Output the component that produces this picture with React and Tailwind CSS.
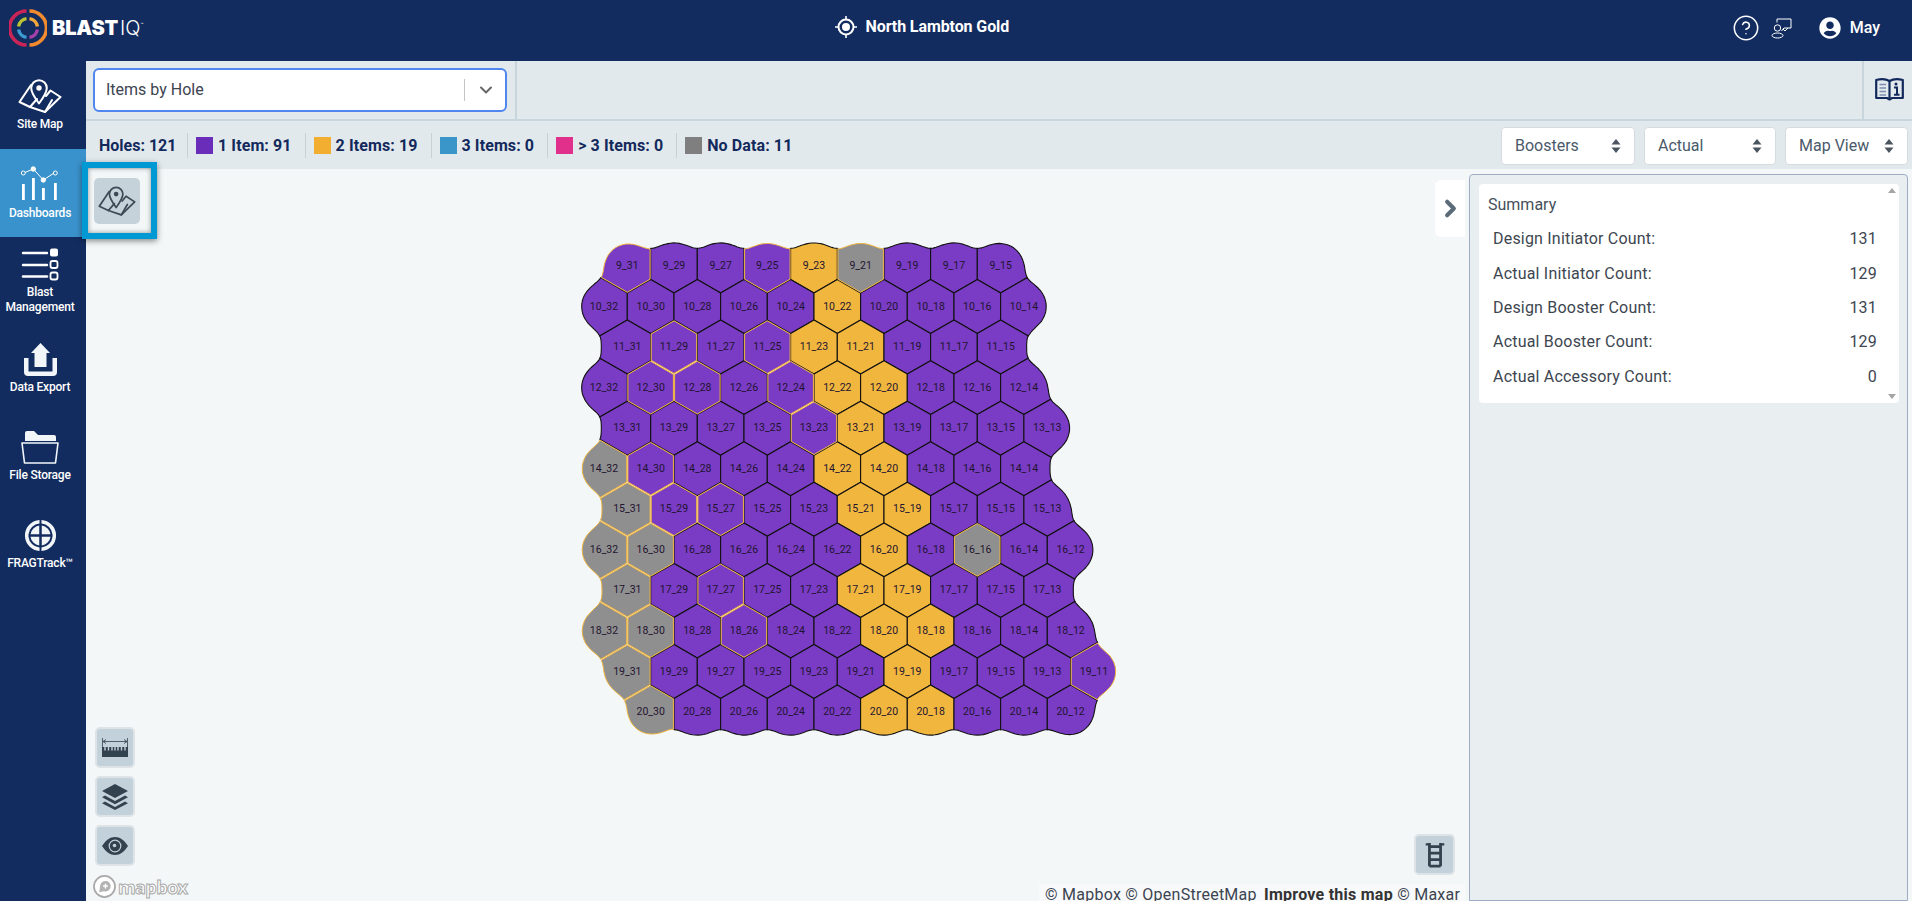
import React from 'react';
import { CircleHelp, ChevronDown, ChevronRight } from 'lucide-react';
import { FaUserCircle } from 'react-icons/fa';

// hole grid: row -> [first, last] hole number, going down by 2
const rows = { 9: [31, 15], 10: [32, 14], 11: [31, 15], 12: [32, 14], 13: [31, 13], 14: [32, 14], 15: [31, 13], 16: [32, 12], 17: [31, 13], 18: [32, 12], 19: [31, 11], 20: [30, 12] };
const twoItems = ['9_23', '10_22', '11_23', '11_21', '12_22', '12_20', '13_21', '14_22', '14_20', '15_21', '15_19', '16_20', '17_21', '17_19', '18_20', '18_18', '19_19', '20_20', '20_18'];
const noData = ['9_21', '14_32', '15_31', '16_32', '16_30', '16_16', '17_31', '18_32', '18_30', '19_31', '20_30'];
const goldEdge = ['9_31', '9_25', '11_29', '11_25', '12_30', '12_28', '12_24', '13_23', '14_30', '15_29', '15_27', '17_27', '18_26', '19_11'];

const holes = [];
Object.keys(rows).forEach((r) => {
    for (let n = rows[r][0]; n >= rows[r][1]; n -= 2) {
        holes.push({ id: `${r}_${n}`, x: 604 + (32 - n) * 23.33, y: 266 + (r - 9) * 40.55 });
    }
});

// soft blob around all holes gives the wavy outer edge
const field = (x, y) => {
    let s = 0;
    holes.forEach((h) => { s += Math.exp(-0.1 * Math.hypot(x - h.x, y - h.y)); });
    return -Math.log(s) / 0.1;
};
const outline = [];
for (let i = 0; i < 720; i++) {
    const a = (i / 720) * Math.PI * 2;
    let r = 420;
    while (r > 0 && field(826 + r * Math.cos(a), 478 + r * Math.sin(a)) > 21.8) r -= 3;
    let lo = r, hi = r + 3;
    for (let j = 0; j < 6; j++) {
        const m = (lo + hi) / 2;
        if (field(826 + m * Math.cos(a), 478 + m * Math.sin(a)) > 21.8) hi = m; else lo = m;
    }
    outline.push([826 + lo * Math.cos(a), 478 + lo * Math.sin(a)]);
}

// cut the outline down to the part nearer to this hole than to any other
const cellOf = (h) => {
    let poly = outline;
    holes.forEach((o) => {
        if (o === h || Math.hypot(o.x - h.x, o.y - h.y) > 110) return;
        const mx = (o.x + h.x) / 2, my = (o.y + h.y) / 2, nx = o.x - h.x, ny = o.y - h.y;
        const side = (p) => (p[0] - mx) * nx + (p[1] - my) * ny;
        const out = [];
        poly.forEach((p, i) => {
            const q = poly[(i + 1) % poly.length];
            const a = side(p), b = side(q);
            if (a <= 0) out.push(p);
            if ((a < 0 && b > 0) || (a > 0 && b < 0)) {
                const t = a / (a - b);
                out.push([p[0] + (q[0] - p[0]) * t, p[1] + (q[1] - p[1]) * t]);
            }
        });
        poly = out;
    });
    return poly;
};
const cells = holes.map((h) => {
    const gold = goldEdge.includes(h.id) || noData.includes(h.id);
    const k = gold ? 0.975 : 1;
    const pts = cellOf(h).map((p) => `${(h.x + (p[0] - h.x) * k).toFixed(1)},${(h.y + (p[1] - h.y) * k).toFixed(1)}`).join(' ');
    const fill = twoItems.includes(h.id) ? '#f1b63e' : noData.includes(h.id) ? '#8f8f8f' : '#7a3cc4';
    return { ...h, gold, pts, fill };
});

const MapIcon = ({ color = '#fff', className }) => (
    <svg viewBox="0 0 44 34" className={className} fill="none" stroke={color} strokeWidth="2" strokeLinejoin="round" strokeLinecap="round">
        <path d="M13 6 L1.5 23 L12 28 L19 20" />
        <path d="M12 28 L27 33 L42.5 18 L32.5 11.5 L28 17" />
        <path d="M27 33 L34 21" />
        <path d="M21 1.2 a7.8 7.8 0 0 1 7.8 7.8 c0 5 -7.8 15.5 -7.8 15.5 s-7.8 -10.5 -7.8 -15.5 a7.8 7.8 0 0 1 7.8 -7.8z" />
        <circle cx="21" cy="9" r="2.7" fill={color} stroke="none" />
    </svg>
);

const DashIcon = () => (
    <svg viewBox="0 0 42 36" className="w-[42px] h-[36px]" fill="none" stroke="#fff" strokeWidth="1">
        <path d="M6 6.5 L14.3 3 L24.3 14 L34.3 7.5" />
        <circle cx="4.3" cy="7" r="2" fill="#3a92cc" />
        <circle cx="14.3" cy="3" r="2.2" fill="#fff" />
        <circle cx="24.3" cy="14" r="2.2" fill="#fff" />
        <circle cx="36.3" cy="7" r="2" fill="#3a92cc" />
        <g fill="#fff" stroke="none">
            <rect x="3" y="18" width="2.8" height="16" />
            <rect x="13" y="12" width="2.8" height="22" />
            <rect x="23" y="22" width="2.8" height="12" />
            <rect x="35" y="17" width="2.8" height="17" />
        </g>
    </svg>
);

const BlastIcon = () => (
    <svg viewBox="0 0 38 33" className="w-[38px] h-[33px]" fill="none" stroke="#fff" strokeWidth="2.4">
        <g strokeLinecap="round">
            <path d="M2 5 H26" />
            <path d="M2 17 H26" />
            <path d="M2 28.5 H26" />
        </g>
        <rect x="29" y="0.5" width="8" height="8" rx="2" fill="#fff" stroke="none" />
        <rect x="29.5" y="13" width="7" height="7" rx="2" strokeWidth="1.8" />
        <rect x="29.5" y="24.5" width="7" height="7" rx="2" strokeWidth="1.8" />
    </svg>
);

const ExportIcon = () => (
    <svg viewBox="0 0 33 33" className="w-[33px] h-[33px]" fill="#f2f6f9">
        <path d="M16.5 0 L26 10 H22.5 V24 H10.5 V10 H7 Z" />
        <path d="M0 15 H4.5 V28.5 H28.5 V15 H33 V29 a4 4 0 0 1 -4 4 H4 a4 4 0 0 1 -4 -4 Z" />
    </svg>
);

const FolderIcon = () => (
    <svg viewBox="0 0 38 33" className="w-[38px] h-[33px]">
        <path d="M4 10 V2 a2 2 0 0 1 2 -2 H13 L17 4 H33 a2 2 0 0 1 2 2 V10 Z" fill="#f2f6f9" />
        <path d="M1 12 H37 L34.5 32 H3.5 Z" fill="none" stroke="#f2f6f9" strokeWidth="1.6" strokeLinejoin="round" />
    </svg>
);

const FragIcon = () => (
    <svg viewBox="0 0 34 34" className="w-[33px] h-[33px]">
        <path d="M16 1 A16 16 0 0 0 1 16 V18 A16 16 0 0 0 16 33 V29.4 A12.5 12.5 0 0 1 4.6 18 V16 A12.5 12.5 0 0 1 16 4.6 Z M18 1 A16 16 0 0 1 33 16 V18 A16 16 0 0 1 18 33 V29.4 A12.5 12.5 0 0 0 29.4 18 V16 A12.5 12.5 0 0 0 18 4.6 Z" fill="#f2f6f9" />
        <path d="M15.7 6.7 A10.4 10.4 0 0 0 6.7 15.7 H15.7 Z M18.3 6.7 A10.4 10.4 0 0 1 27.3 15.7 H18.3 Z M15.7 27.3 A10.4 10.4 0 0 1 6.7 18.3 H15.7 Z M18.3 27.3 A10.4 10.4 0 0 0 27.3 18.3 H18.3 Z" fill="#f2f6f9" />
    </svg>
);

const Logo = () => (
    <svg viewBox="0 0 38 38" className="w-[38px] h-[38px]" fill="none">
        <path d="M17.5 2 A17 17 0 0 0 17.5 36" stroke="#cb2456" strokeWidth="3.6" />
        <path d="M20.5 2 A17 17 0 0 1 20.5 36" stroke="#f28a2e" strokeWidth="3.6" />
        <path d="M17.5 9.6 A9.5 9.5 0 0 0 9.6 17.5" stroke="#b9c433" strokeWidth="3.4" />
        <path d="M20.5 9.6 A9.5 9.5 0 0 1 28.4 17.5" stroke="#f3a93a" strokeWidth="3.4" />
        <path d="M9.6 20.5 A9.5 9.5 0 0 0 17.5 28.4" stroke="#3c9bd0" strokeWidth="3.4" />
        <path d="M28.4 20.5 A9.5 9.5 0 0 1 20.5 28.4" stroke="#a540a8" strokeWidth="3.4" />
    </svg>
);

const TargetIcon = () => (
    <svg viewBox="0 0 22 22" className="w-[22px] h-[22px]" fill="none" stroke="#fff" strokeWidth="2">
        <circle cx="11" cy="11" r="7.5" />
        <circle cx="11" cy="11" r="4" fill="#fff" stroke="none" />
        <path d="M11 0 V3.5 M11 18.5 V22 M0 11 H3.5 M18.5 11 H22" strokeWidth="1.6" />
    </svg>
);

const SupportIcon = () => (
    <svg viewBox="0 0 21 21" className="w-[21px] h-[21px]" fill="none" stroke="#fff" strokeWidth="1">
        <path d="M6 4.5 V1 H20 V10 H13 L10.5 13" />
        <circle cx="6.5" cy="10" r="3.2" />
        <ellipse cx="6.5" cy="17.5" rx="5.5" ry="2.5" />
        <path d="M12 11 L14 13 L17 10" />
    </svg>
);

const BookIcon = () => (
    <svg viewBox="0 0 29 23" className="w-[29px] h-[23px]" fill="none" stroke="#13295c" strokeWidth="2.2">
        <path d="M14.5 3 C11 1 5 1 1.2 2 V20 H12 L14.5 21.5 L17 20 H27.8 V2 C24 1 18 1 14.5 3 Z" strokeLinejoin="round" />
        <path d="M14.5 3 V21" />
        <path d="M4.5 6.5 H11 M4.5 10 H11 M4.5 13.5 H11 M4.5 17 H11" stroke="#7f8db0" strokeWidth="1.3" />
        <circle cx="21" cy="6" r="1.5" fill="#13295c" stroke="none" />
        <path d="M19 9.5 H22 V16.5 M19 16.8 H24.5" strokeWidth="2" />
    </svg>
);

const RulerIcon = () => (
    <svg viewBox="0 0 26 20" className="w-[26px] h-[20px]" fill="none" stroke="#33424f">
        <path d="M0.5 0 V12 M25.5 0 V12 M1 3.5 H25 M1 3.5 L4 1.5 M1 3.5 L4 5.5 M25 3.5 L22 1.5 M25 3.5 L22 5.5" strokeWidth="0.8" />
        <path d="M0 9 H26 V19 H0 Z" fill="#33424f" stroke="none" />
        <path d="M3 9 V12.5 M6.5 9 V12.5 M10 9 V12.5 M13 9 V12.5 M16 9 V12.5 M19.5 9 V12.5 M23 9 V12.5" stroke="#c3d1db" strokeWidth="1.4" />
    </svg>
);

const LayersIcon = () => (
    <svg viewBox="0 0 26 26" className="w-[26px] h-[26px]" fill="#33424f">
        <path d="M13 0 L26 7 L13 14 L0 7 Z" />
        <path d="M3 11.5 L13 17 L23 11.5 L26 13.3 L13 20.2 L0 13.3 Z" />
        <path d="M3 17.5 L13 23 L23 17.5 L26 19.2 L13 26 L0 19.2 Z" />
    </svg>
);

const EyeIcon = () => (
    <svg viewBox="0 0 26 18" className="w-[26px] h-[18px]">
        <path d="M0 9 C4 3 8 0 13 0 C18 0 22 3 26 9 C22 15 18 18 13 18 C8 18 4 15 0 9 Z" fill="#33424f" />
        <circle cx="13" cy="9" r="5.8" fill="none" stroke="#c3d1db" strokeWidth="1.2" />
        <circle cx="12.5" cy="8.5" r="1.8" fill="#c3d1db" />
    </svg>
);

const LadderIcon = () => (
    <svg viewBox="0 0 22 28" className="w-[22px] h-[26px]" fill="none" stroke="#33424f" strokeWidth="3">
        <path d="M5 1 V26 M17 1 V26 M5 26 H17 M5 19 H17 M5 12 H17 M5 5 H17" />
        <path d="M1 2.5 H5 M17 2.5 H21" strokeWidth="2.4" />
    </svg>
);

const MapboxMark = () => (
    <svg viewBox="0 0 24 24" className="w-[23px] h-[23px]">
        <circle cx="12" cy="12" r="11" fill="#fff" stroke="#a9a9a9" strokeWidth="1.8" />
        <path d="M6.5 18 L7.5 11 a5.5 5.5 0 1 1 4 6 Z" fill="#b3b3b3" />
        <path d="M13 9 V14 M10.5 11.5 H15.5" stroke="#fff" strokeWidth="1.6" />
    </svg>
);

const UpDown = () => (
    <svg viewBox="0 0 10 14" className="w-[10px] h-[14px]" fill="#4a5560">
        <path d="M5 0 L9.5 5.5 H0.5 Z M5 14 L0.5 8.5 H9.5 Z" />
    </svg>
);

const navItems = [
    { label: 'Site Map', icon: <MapIcon className="w-[44px] h-[34px]" />, pad: 'pt-[18px]' },
    { label: 'Dashboards', icon: <DashIcon />, pad: 'pt-[17px]', active: true },
    { label: 'Blast\nManagement', icon: <BlastIcon />, pad: 'pt-[11px]' },
    { label: 'Data Export', icon: <ExportIcon />, pad: 'pt-[18px]' },
    { label: 'File Storage', icon: <FolderIcon />, pad: 'pt-[18px]' },
    { label: 'FRAGTrack™', icon: <FragIcon />, pad: 'pt-[18px]' },
];

const legend = [
    { color: 'bg-[#6a2db9]', text: '1 Item: 91' },
    { color: 'bg-[#f2ae30]', text: '2 Items: 19' },
    { color: 'bg-[#3a95c9]', text: '3 Items: 0' },
    { color: 'bg-[#e0308c]', text: '> 3 Items: 0' },
    { color: 'bg-[#7f7f7f]', text: 'No Data: 11' },
];

const summary = [
    ['Design Initiator Count:', 131],
    ['Actual Initiator Count:', 129],
    ['Design Booster Count:', 131],
    ['Actual Booster Count:', 129],
    ['Actual Accessory Count:', 0],
];

const App = () => {
    return (
        <div className="h-screen w-full flex flex-col overflow-hidden bg-[#f3f7f8] font-[Roboto,sans-serif]">
            <header className="h-[61px] shrink-0 bg-[#132c60] flex items-center text-white relative">
                <div className="w-[246px] pl-[9px] pb-[5px] flex items-center">
                    <Logo />
                    <span className="ml-[5px] text-[20px] leading-none font-black font-[Inter,sans-serif] tracking-[-0.2px]">BLAST</span>
                    <span className="ml-[2px] text-[20px] leading-none font-light font-[Inter,sans-serif]">IQ</span>
                    <span className="text-[5px] self-start mt-[12px]">™</span>
                </div>
                <div className="flex-1 flex items-center justify-center pb-[8px] pr-[134px]">
                    <TargetIcon />
                    <span className="ml-[9px] text-[16px] font-bold tracking-[-0.1px]">North Lambton Gold</span>
                </div>
                <div className="flex items-center pr-[32px] pb-[5px]">
                    <CircleHelp className="w-[28px] h-[28px]" strokeWidth={1.3} />
                    <div className="ml-[11px]"><SupportIcon /></div>
                    <FaUserCircle className="ml-[27px] w-[22px] h-[22px]" />
                    <span className="ml-[9px] text-[16px] font-medium">May</span>
                </div>
            </header>

            <div className="flex-1 flex min-h-0">
                <nav className="w-[86px] shrink-0 bg-[#132c60] text-white">
                    {navItems.map((item) => (
                        <div key={item.label} className={`h-[88px] pr-[6px] flex flex-col items-center ${item.pad} ${item.active ? 'bg-[#3a92cc]' : ''}`}>
                            {item.icon}
                            <div className="mt-[4px] text-[12px] leading-[15px] font-medium text-center whitespace-pre-line tracking-[-0.2px]">{item.label}</div>
                        </div>
                    ))}
                </nav>

                <main className="flex-1 min-w-0 flex flex-col">
                    <div className="h-[60px] shrink-0 bg-[#e2e9ed] border-b-2 border-[#c9d5dd] flex">
                        <div className="w-[431px] pl-[7px] pt-[7px] border-r-2 border-[#c9d5dd]">
                            <div className="w-[414px] h-[44px] bg-white border-2 border-[#4f86f0] rounded-[6px] flex items-center">
                                <span className="pl-[11px] flex-1 text-[16px] text-[#3c4450]">Items by Hole</span>
                                <span className="w-px h-[22px] bg-[#c4c4c4]" />
                                <ChevronDown className="w-[20px] h-[20px] ml-[11px] mr-[9px] text-[#666]" strokeWidth={2.4} />
                            </div>
                        </div>
                        <div className="flex-1" />
                        <div className="w-[50px] border-l-2 border-[#c9d5dd] flex items-center pl-[11px] pb-[2px]">
                            <BookIcon />
                        </div>
                    </div>

                    <div className="h-[48px] shrink-0 bg-[#e2e9ed] flex items-center pl-[13px] pr-[4px] pt-[1px] text-[16px] font-bold text-[#13295c]">
                        <span className="w-[88px]">Holes: 121</span>
                        {legend.map((l) => (
                            <div key={l.text} className="flex items-center h-[25px] border-l border-[#c9d1d6] pl-[8px] pr-[13px]">
                                <span className={`w-[17px] h-[17px] ${l.color}`} />
                                <span className="ml-[5px] tracking-[0.1px]">{l.text}</span>
                            </div>
                        ))}
                        <div className="ml-auto flex gap-[9px] font-normal text-[#4a5a6a]">
                            {[['Boosters', 'w-[134px]'], ['Actual', 'w-[132px]'], ['Map View', 'w-[123px]']].map(([t, w]) => (
                                <div key={t} className={`${w} h-[38px] bg-white border border-[#d5dce0] rounded-[4px] flex items-center justify-between pl-[13px] pr-[13px]`}>
                                    {t}
                                    <UpDown />
                                </div>
                            ))}
                        </div>
                    </div>

                    <div className="flex-1 min-h-0 flex">
                        <div className="flex-1 min-w-0 relative">
                            <svg viewBox="86 169 1379 732" className="absolute left-0 top-0 w-[1379px] h-[732px]">
                                {cells.filter((c) => !c.gold).map((c) => (
                                    <polygon key={c.id} points={c.pts} fill={c.fill} stroke="#111" strokeWidth="1.1" strokeLinejoin="round" />
                                ))}
                                {cells.filter((c) => c.gold).map((c) => (
                                    <polygon key={c.id} points={c.pts} fill={c.fill} stroke="#f0b43c" strokeWidth="1" strokeLinejoin="round" />
                                ))}
                                {cells.map((c) => (
                                    <text key={c.id} x={c.x} y={c.y - 0.5} textAnchor="middle" dominantBaseline="central" fontFamily="Roboto, sans-serif" fontSize="10.5" fill="#1f1430">{c.id}</text>
                                ))}
                            </svg>

                            <div className="absolute left-[-4px] top-[-7px] w-[75px] h-[77px] border-[6px] border-[#0099d4] shadow-[0_2px_6px_rgba(0,0,0,0.45),inset_0_0_5px_rgba(0,0,0,0.4)]">
                                <div className="ml-[6px] mt-[10px] w-[46px] h-[46px] rounded-[5px] bg-[#c6d2da] flex items-center justify-center">
                                    <MapIcon color="#3c4a56" className="w-[38px] h-[30px]" />
                                </div>
                            </div>

                            <div className="absolute left-[9px] top-[558px] flex flex-col gap-[8px]">
                                <div className="w-[40px] h-[41px] rounded-[5px] bg-[#c3d1db] border-2 border-[#dde3e6] flex items-center justify-center"><RulerIcon /></div>
                                <div className="w-[40px] h-[41px] rounded-[5px] bg-[#c3d1db] border-2 border-[#dde3e6] flex items-center justify-center"><LayersIcon /></div>
                                <div className="w-[40px] h-[41px] rounded-[5px] bg-[#c3d1db] border-2 border-[#dde3e6] flex items-center justify-center"><EyeIcon /></div>
                            </div>

                            <div className="absolute left-[7px] bottom-[3px] flex items-center">
                                <MapboxMark />
                                <span className="ml-[2px] text-[18px] leading-none font-bold font-['Open_Sans',sans-serif] text-white tracking-[-0.6px] [-webkit-text-stroke:1px_#a9a9a9]">mapbox</span>
                            </div>

                            <div className="absolute right-[10px] top-[665px] w-[41px] h-[41px] rounded-[5px] bg-[#c3d1db] border-2 border-[#dde3e6] flex items-center justify-center">
                                <LadderIcon />
                            </div>

                            <div className="absolute right-0 top-[715px] w-[426px] h-[17px] bg-[#f7f9fa] pl-[6px] text-[16px] leading-[21px] whitespace-nowrap overflow-hidden text-[#3c4450] tracking-[0.25px]">
                                © Mapbox © OpenStreetMap <b className="ml-[3px] text-[#333]">Improve this map</b> © Maxar
                            </div>

                            <div className="absolute right-0 top-[11px] w-[30px] h-[57px] bg-white rounded-l-[6px] flex items-center justify-center">
                                <ChevronRight className="w-[27px] h-[27px] text-[#5b6b78]" strokeWidth={3.6} />
                            </div>
                        </div>

                        <aside className="w-[439px] shrink-0 mt-[5px] mr-[4px] ml-[4px] bg-[#e9eef1] border border-[#9eadc4] rounded-t-[4px] pt-[9px] px-[9px]">
                            <div className="relative w-[420px] h-[219px] bg-white rounded-[4px] pl-[9px] pr-[22px] pt-[7px] text-[#3d4650] text-[16px]">
                                <div className="h-[31px] leading-[27px] text-[#46505c]">Summary</div>
                                {summary.map(([name, value]) => (
                                    <div key={name} className="h-[34.4px] flex items-center justify-between pl-[5px] tracking-[0.2px]">
                                        <span>{name}</span>
                                        <span>{value}</span>
                                    </div>
                                ))}
                                <span className="absolute right-[3px] top-[4px] border-x-[4px] border-x-transparent border-b-[5px] border-b-[#a4a4a4]" />
                                <span className="absolute right-[3px] bottom-[4px] border-x-[4px] border-x-transparent border-t-[5px] border-t-[#a4a4a4]" />
                            </div>
                        </aside>
                    </div>
                </main>
            </div>
        </div>
    );
};

export default App;
